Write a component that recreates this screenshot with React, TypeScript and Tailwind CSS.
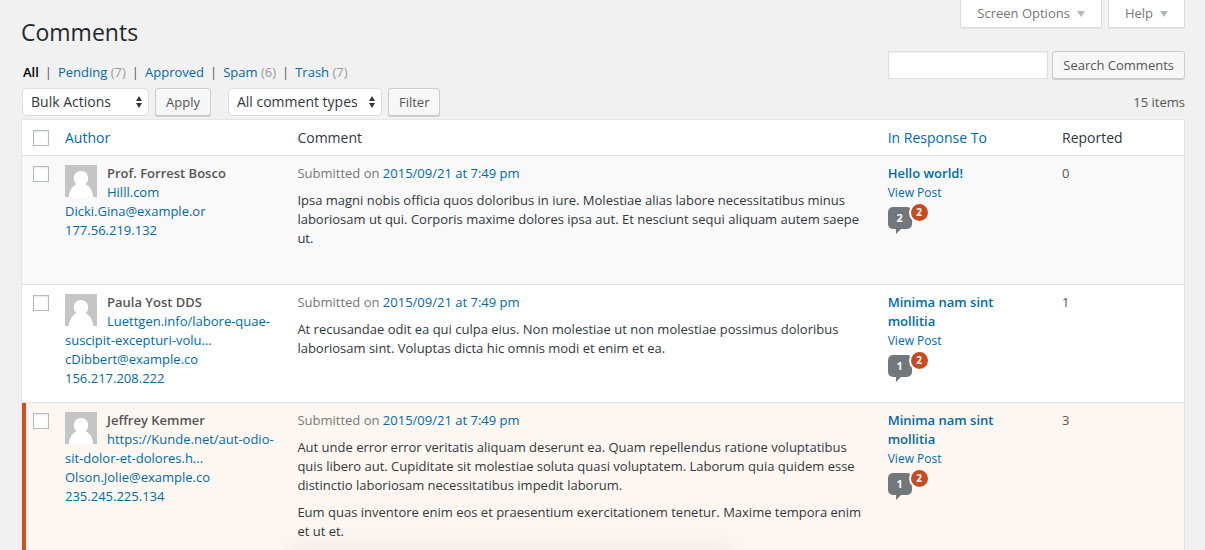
import React from "react";

type Comment = {
  id: number;
  name: string;
  url: string;
  email: string;
  ip: string;
  body: string[];
  post: string;
  approved: number;
  pending: number;
  reported: number;
};

const comments: Comment[] = [
  {
    id: 1,
    name: "Prof. Forrest Bosco",
    url: "Hilll.com",
    email: "Dicki.Gina@example.or",
    ip: "177.56.219.132",
    body: [
      "Ipsa magni nobis officia quos doloribus in iure. Molestiae alias labore necessitatibus minus laboriosam ut qui. Corporis maxime dolores ipsa aut. Et nesciunt sequi aliquam autem saepe ut.",
    ],
    post: "Hello world!",
    approved: 2,
    pending: 2,
    reported: 0,
  },
  {
    id: 2,
    name: "Paula Yost DDS",
    url: "Luettgen.info/labore-quae-suscipit-excepturi-volu...",
    email: "cDibbert@example.co",
    ip: "156.217.208.222",
    body: [
      "At recusandae odit ea qui culpa eius. Non molestiae ut non molestiae possimus doloribus laboriosam sint. Voluptas dicta hic omnis modi et enim et ea.",
    ],
    post: "Minima nam sint mollitia",
    approved: 1,
    pending: 2,
    reported: 1,
  },
  {
    id: 3,
    name: "Jeffrey Kemmer",
    url: "https://Kunde.net/aut-odio-sit-dolor-et-dolores.h...",
    email: "Olson.Jolie@example.co",
    ip: "235.245.225.134",
    body: [
      "Aut unde error error veritatis aliquam deserunt ea. Quam repellendus ratione voluptatibus quis libero aut. Cupiditate sit molestiae soluta quasi voluptatem. Laborum quia quidem esse distinctio laboriosam necessitatibus impedit laborum.",
      "Eum quas inventore enim eos et praesentium exercitationem tenetur. Maxime tempora enim et ut et.",
    ],
    post: "Minima nam sint mollitia",
    approved: 1,
    pending: 2,
    reported: 3,
  },
];

const filters = [
  { label: "Pending", count: 7 },
  { label: "Approved" },
  { label: "Spam", count: 6 },
  { label: "Trash", count: 7 },
];

function Checkbox({ label }: { label: string }) {
  return (
    <input
      type="checkbox"
      aria-label={label}
      className="block size-4 appearance-none border border-[#b4b9be] bg-white shadow-[inset_0_1px_2px_rgba(0,0,0,0.1)] checked:bg-[#006ba5]"
    />
  );
}

function Button({ children, className = "" }: { children: React.ReactNode; className?: string }) {
  return (
    <button
      type="button"
      className={`h-7 rounded-[3px] border border-[#ccc] bg-[#f7f7f7] px-2.5 text-[13px] leading-[26px] whitespace-nowrap text-[#555] shadow-[0_1px_0_#ccc] ${className}`}
    >
      {children}
    </button>
  );
}

function Select({ label, options, className }: { label: string; options: string[]; className: string }) {
  return (
    <div className={`relative ${className}`}>
      <select
        aria-label={label}
        className="h-7 w-full appearance-none rounded-[5px] border border-[#ddd] bg-white pr-6 pl-2 text-sm leading-[26px] text-[#32373c]"
      >
        {options.map((option) => (
          <option key={option}>{option}</option>
        ))}
      </select>
      <svg viewBox="0 0 6 12" className="pointer-events-none absolute top-2 right-[7px] h-3 w-1.5 fill-[#32373c]" aria-hidden="true">
        <path d="M3 0 6 5H0ZM0 7h6L3 12Z" />
      </svg>
    </div>
  );
}

function ScreenTab({ children }: { children: React.ReactNode }) {
  return (
    <button
      type="button"
      className="flex h-7 items-center gap-[7px] border border-t-0 border-[#ddd] bg-white px-4 text-[13px] text-[#777] shadow-[0_1px_1px_-1px_rgba(0,0,0,0.3)]"
    >
      {children}
      <svg viewBox="0 0 8 6" className="h-1.5 w-2 fill-[#b4b9be]" aria-hidden="true">
        <path d="M0 0h8L4 6Z" />
      </svg>
    </button>
  );
}

function Avatar() {
  return (
    <svg viewBox="0 0 32 32" className="float-left mt-px mr-2.5 size-8" aria-hidden="true">
      <path fill="#c5c5c5" d="M0 0h32v32H0z" />
      <path
        fill="#fff"
        d="M16 6c4.200 0 7.200 3.200 7.200 7.200 0 2.600-1.100 4.600-2.700 6 4.300 1.800 7.300 6.600 7.700 12.800H3.800c.4-6.200 3.400-11 7.700-12.800-1.600-1.400-2.700-3.400-2.700-6C8.800 9.200 11.800 6 16 6Z"
      />
    </svg>
  );
}

function CommentRow({ comment }: { comment: Comment }) {
  const pending = comment.id === 3;
  return (
    <tr
      className={`align-top *:border-b *:border-b-[#e1e1e1] ${
        pending ? "bg-[#fef7f1]" : comment.id % 2 ? "bg-[#f9f9f9]" : "bg-white"
      }`}
    >
      <td className={`pt-2.5 ${pending ? "border-l-4 border-l-[#d54e21] pl-[7px]" : "pl-[11px]"}`}>
        <Checkbox label={`Select comment by ${comment.name}`} />
      </td>
      <td className="px-2.5 py-2">
        <Avatar />
        <strong className="font-semibold">{comment.name}</strong>
        <br />
        <a href="#" className="text-[#006ba5]">{comment.url}</a>
        <br />
        <a href="#" className="text-[#006ba5]">{comment.email}</a>
        <br />
        <a href="#" className="text-[#006ba5]">{comment.ip}</a>
      </td>
      <td className="px-2.5 pt-2 pb-9">
        <div className="text-[#777]">
          Submitted on <a href="#" className="text-[#006ba5]">2015/09/21 at 7:49 pm</a>
        </div>
        <div className="mt-2 flex flex-col gap-2 text-[#32373c]">
          {comment.body.map((text) => (
            <p key={text}>{text}</p>
          ))}
        </div>
      </td>
      <td className="px-2.5 pt-2 pb-[19px]">
        <a href="#" className="block font-semibold text-[#006ba5]">{comment.post}</a>
        <a href="#" className="block text-xs leading-[19px] text-[#006ba5]">View Post</a>
        <div className="relative mt-[5px] h-7 w-10">
          <a href="#" aria-label={`${comment.approved} approved`} className="flex h-[22px] w-6 items-center justify-center rounded-[5px] bg-[#72777c] text-[11px] leading-[22px] font-bold text-white">
            {comment.approved}
          </a>
          <svg viewBox="0 0 5 5" className="ml-2 size-[5px] fill-[#72777c]" aria-hidden="true">
            <path d="M0 0h5L0 5Z" />
          </svg>
          <a href="#" aria-label={`${comment.pending} pending`} className="absolute -top-[5px] left-[21px] flex size-[21px] items-center justify-center rounded-full border-2 border-white bg-[#ca4a1f] text-[10px] leading-[17px] font-bold text-white">
            {comment.pending}
          </a>
        </div>
      </td>
      <td className="px-2.5 py-2">{comment.reported}</td>
    </tr>
  );
}

export default function App() {
  return (
    <div className="relative h-screen overflow-hidden bg-[#f1f1f1] pr-5 pl-[21px] font-['Open_Sans',sans-serif] text-[13px] leading-[19px] text-[#555]">
      <header className="flex items-start justify-between">
        <h1 className="pt-[18px] text-[23px] leading-[29px] text-[#23282d]">Comments</h1>
        <div className="flex gap-1.5">
          <ScreenTab>Screen Options</ScreenTab>
          <ScreenTab>Help</ScreenTab>
        </div>
      </header>

      <div className="mt-1 flex items-start justify-between">
        <nav className="flex gap-1.5 pt-3 pl-0.5">
          <a href="#" className="font-semibold text-black">All</a>
          {filters.map((filter) => (
            <span key={filter.label} className="flex gap-1.5">
              <span>|</span>
              <a href="#" className="text-[#006ba5]">
                {filter.label}
                {filter.count && <span className="text-[#999]"> ({filter.count})</span>}
              </a>
            </span>
          ))}
        </nav>
        <div className="flex gap-1">
          <input
            type="search"
            aria-label="Search comments"
            className="h-7 w-40 border border-[#ddd] bg-white px-1.5 shadow-[inset_0_1px_2px_rgba(0,0,0,0.07)]"
          />
          <Button>Search Comments</Button>
        </div>
      </div>

      <div className="mt-1.5 flex h-7 items-center justify-between pl-px">
        <div className="flex h-7">
          <Select label="Bulk actions" options={["Bulk Actions"]} className="mr-1.5 w-[127px]" />
          <Button className="mr-[17px]">Apply</Button>
          <Select label="Comment type" options={["All comment types"]} className="mr-1.5 w-[154px]" />
          <Button>Filter</Button>
        </div>
        <span>15 items</span>
      </div>

      <div className="mt-[3px] border border-[#e5e5e5] bg-white shadow-[0_1px_1px_rgba(0,0,0,0.04)]">
        <table className="w-full table-fixed border-separate border-spacing-0 text-left">
          <colgroup>
            <col className="w-[33px]" />
            <col className="w-[20%]" />
            <col />
            <col className="w-[15%]" />
            <col className="w-[132px]" />
          </colgroup>
          <thead>
            <tr className="h-9 text-sm text-[#32373c] *:border-b *:border-b-[#e1e1e1]">
              <th className="pl-[11px]"><Checkbox label="Select all" /></th>
              <th className="px-2.5 font-normal"><a href="#" className="text-[#006ba5]">Author</a></th>
              <th className="px-2.5 font-normal">Comment</th>
              <th className="px-2.5 font-normal"><a href="#" className="text-[#006ba5]">In Response To</a></th>
              <th className="px-2.5 font-normal">Reported</th>
            </tr>
          </thead>
          <tbody>
            {comments.map((comment) => (
              <CommentRow key={comment.id} comment={comment} />
            ))}
          </tbody>
        </table>
      </div>
      <div className="absolute -bottom-2 left-[24%] h-2 w-[37%] shadow-[0_0_24px_rgba(0,0,0,0.12)]" aria-hidden="true" />
    </div>
  );
}
